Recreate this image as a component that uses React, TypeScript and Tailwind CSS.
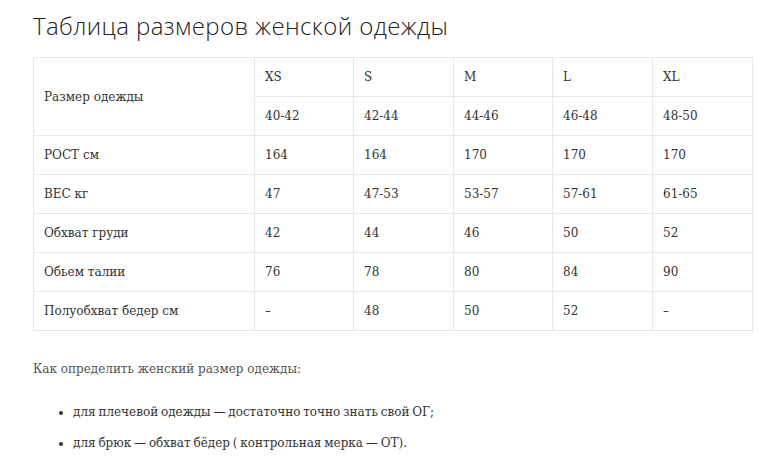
import React from "react";

const sizes = [
    { label: "XS", range: "40-42" },
    { label: "S", range: "42-44" },
    { label: "M", range: "44-46" },
    { label: "L", range: "46-48" },
    { label: "XL", range: "48-50" },
];

const rows: { name: string; values: string[] }[] = [
    { name: "РОСТ см", values: ["164", "164", "170", "170", "170"] },
    { name: "ВЕС кг", values: ["47", "47-53", "53-57", "57-61", "61-65"] },
    { name: "Обхват груди", values: ["42", "44", "46", "50", "52"] },
    { name: "Обьем талии", values: ["76", "78", "80", "84", "90"] },
    { name: "Полуобхват бедер см", values: ["–", "48", "50", "52", "–"] },
];

const cell = "border border-[#e9e9e9] px-[10px] h-[39px] align-middle";

export default function App() {
    return (
        <div className="bg-white w-[780px] h-[473px] overflow-hidden pl-[33px] pt-[10px] font-['DejaVu_Serif',serif] text-[#333]">
            <h1 className="font-['Open_Sans',sans-serif] font-light text-[24px] leading-[32px] text-[#222] tracking-[0.4px]">
                Таблица размеров женской одежды
            </h1>

            <table className="mt-[15px] border-collapse w-[719px] text-[12px] table-fixed">
                <colgroup>
                    <col className="w-[221px]" />
                    <col className="w-[99px]" />
                    <col className="w-[100px]" />
                    <col className="w-[99px]" />
                    <col className="w-[100px]" />
                    <col className="w-[100px]" />
                </colgroup>
                <tbody>
                    <tr>
                        <td rowSpan={2} className={cell}>Размер одежды</td>
                        {sizes.map((s) => (
                            <td key={s.label} className={cell}>{s.label}</td>
                        ))}
                    </tr>
                    <tr>
                        {sizes.map((s) => (
                            <td key={s.range} className={cell}>{s.range}</td>
                        ))}
                    </tr>
                    {rows.map((r) => (
                        <tr key={r.name}>
                            <td className={cell}>{r.name}</td>
                            {r.values.map((v, i) => (
                                <td key={i} className={cell}>{v}</td>
                            ))}
                        </tr>
                    ))}
                </tbody>
            </table>

            <p className="mt-[29px] text-[12px] text-[#555]">Как определить женский размер одежды:</p>

            <ul className="mt-[25px] ml-[40px] list-disc text-[12px] text-[#333] flex flex-col gap-[13px] [word-spacing:-1px]">
                <li>для плечевой одежды — достаточно точно знать свой ОГ;</li>
                <li>для брюк — обхват бёдер ( контрольная мерка — ОТ).</li>
            </ul>
        </div>
    );
}
